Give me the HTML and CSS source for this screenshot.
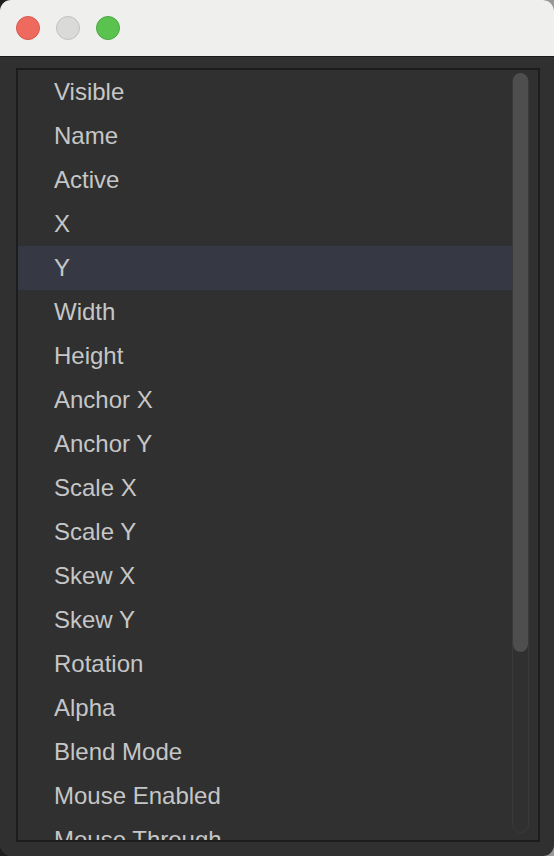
FILE: index.html
```html
<!DOCTYPE html>
<html>
<head>
<meta charset="utf-8">
<link rel="stylesheet" href="styles.css">
</head>
<body>
<div class="window">
  <div class="titlebar">
    <span class="light red"></span>
    <span class="light gray"></span>
    <span class="light green"></span>
  </div>
  <div class="content">
    <div class="listbox">
      <div class="rows">
        <div class="row">Visible</div>
        <div class="row">Name</div>
        <div class="row">Active</div>
        <div class="row">X</div>
        <div class="row selected">Y</div>
        <div class="row">Width</div>
        <div class="row">Height</div>
        <div class="row">Anchor X</div>
        <div class="row">Anchor Y</div>
        <div class="row">Scale X</div>
        <div class="row">Scale Y</div>
        <div class="row">Skew X</div>
        <div class="row">Skew Y</div>
        <div class="row">Rotation</div>
        <div class="row">Alpha</div>
        <div class="row">Blend Mode</div>
        <div class="row">Mouse Enabled</div>
        <div class="row">Mouse Through</div>
      </div>
      <div class="scrollcol">
        <div class="track"><div class="thumb"></div></div>
      </div>
    </div>
  </div>
</div>
</body>
</html>
```

FILE: styles.css
```css
html, body {
  margin: 0;
  padding: 0;
  width: 554px;
  height: 856px;
  overflow: hidden;
  background: linear-gradient(to right, #1e1e1e 0%, #3a3a3a 50%, #9a9a9a 100%);
}
.window {
  width: 554px;
  height: 856px;
  border-radius: 11px;
  overflow: hidden;
  display: flex;
  flex-direction: column;
  background: #303030;
  font-family: "Liberation Sans", Arial, sans-serif;
}
.titlebar {
  flex: 0 0 57px;
  height: 57px;
  background: #efefed;
  border-bottom: 1px solid #1b1b1b;
  display: flex;
  align-items: center;
  gap: 16px;
  padding-left: 16px;
  box-sizing: border-box;
}
.light {
  width: 24px;
  height: 24px;
  border-radius: 50%;
  box-sizing: border-box;
}
.red { background: #ee6a5f; border: 1px solid #d9574d; }
.gray { background: #dadad8; border: 1px solid #c2c2c0; }
.green { background: #5ac34f; border: 1px solid #4aa942; }
.content {
  flex: 1;
  padding: 11px 14px 14px 16px;
  display: flex;
  min-height: 0;
}
.listbox {
  flex: 1;
  border: 2px solid #1c1c1c;
  display: flex;
  min-height: 0;
  overflow: hidden;
}
.rows {
  flex: 1;
  overflow: hidden;
}
.row {
  height: 44px;
  line-height: 44px;
  padding-left: 36px;
  color: #c6c6c6;
  font-size: 24px;
  white-space: nowrap;
}
.row.selected {
  background: #363944;
}
.scrollcol {
  width: 26px;
  flex: 0 0 26px;
  padding: 3px 9px 7px 0;
  box-sizing: border-box;
  display: flex;
}
.track {
  flex: 1;
  border: 1px solid #3a3a3a;
  border-radius: 9px;
  box-sizing: border-box;
}
.thumb {
  height: 579px;
  margin-top: -1px;
  background: #4e4e4e;
  border-radius: 8px;
}
```
